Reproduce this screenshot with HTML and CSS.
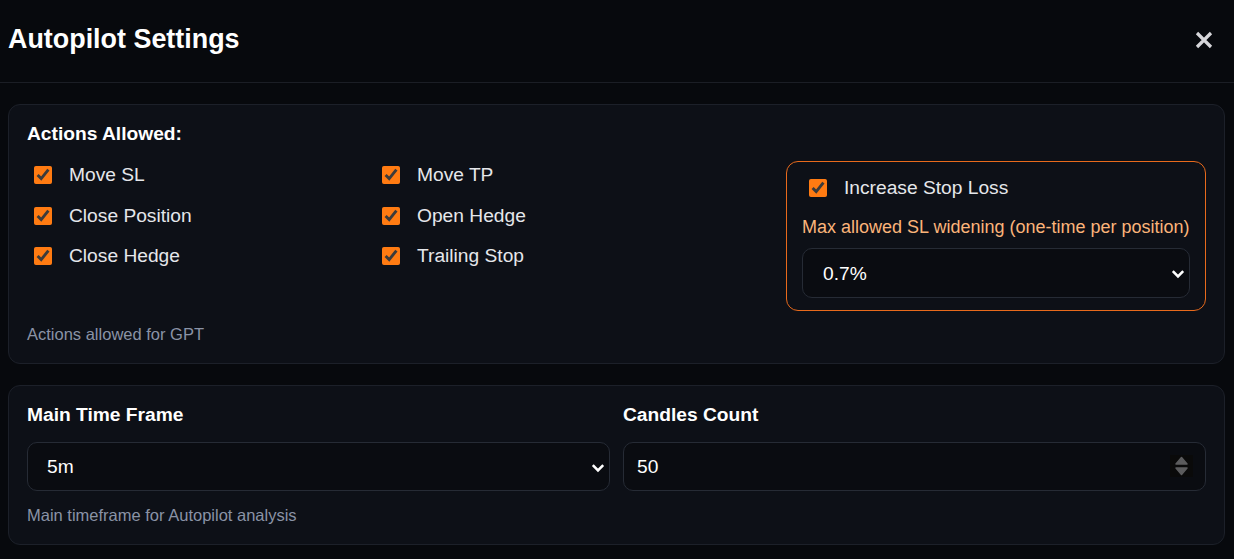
FILE: index.html
```html
<!DOCTYPE html>
<html lang="en">
  <head>
    <meta charset="UTF-8" />
    <meta name="viewport" content="width=device-width, initial-scale=1.0" />
    <title>Autopilot Settings</title>
    <link rel="stylesheet" href="styles.css">
  </head>

  <body>
    <div class="modal">
      <header class="modal-head">
        <h1>Autopilot Settings</h1>
        <button class="close" aria-label="Close">
          <svg width="18" height="18" viewBox="0 0 18 18">
            <path d="M2 2 L16 16 M16 2 L2 16" />
          </svg>
        </button>
      </header>

      <div class="modal-body">
        <section class="card">
          <h2 class="card-title">Actions Allowed:</h2>
          <div class="actions">
            <div class="actions-grid">
              <label class="check"><input type="checkbox" checked> Move SL</label>
              <label class="check"><input type="checkbox" checked> Move TP</label>
              <label class="check"><input type="checkbox" checked> Close Position</label>
              <label class="check"><input type="checkbox" checked> Open Hedge</label>
              <label class="check"><input type="checkbox" checked> Close Hedge</label>
              <label class="check"><input type="checkbox" checked> Trailing Stop</label>
            </div>
            <div class="sl-box">
              <label class="check"><input type="checkbox" checked> Increase Stop Loss</label>
              <p class="sl-note">Max allowed SL widening (one-time per position)</p>
              <div class="select-wrap tall">
                <select class="field-input">
                  <option>0.5%</option>
                  <option selected>0.7%</option>
                  <option>1%</option>
                </select>
                <svg class="chev" width="14" height="10" viewBox="0 0 14 10"><path d="M1.8 2.2 L7 7.4 L12.2 2.2" /></svg>
              </div>
            </div>
          </div>
          <p class="hint">Actions allowed for GPT</p>
        </section>

        <section class="card">
          <div class="fields">
            <div class="field">
              <label class="field-label">Main Time Frame</label>
              <div class="select-wrap">
                <select class="field-input">
                  <option>1m</option>
                  <option selected>5m</option>
                  <option>15m</option>
                  <option>1h</option>
                </select>
                <svg class="chev" width="14" height="10" viewBox="0 0 14 10"><path d="M1.8 2.2 L7 7.4 L12.2 2.2" /></svg>
              </div>
            </div>
            <div class="field">
              <label class="field-label">Candles Count</label>
              <div class="select-wrap">
                <input class="field-input num" type="number" value="50">
                <svg class="spin" width="23" height="22" viewBox="0 0 23 22">
                  <path d="M11.5 2.5 L17 9 L6 9 Z" />
                  <path d="M6 13 L17 13 L11.5 19.5 Z" />
                </svg>
              </div>
            </div>
          </div>
          <p class="hint">Main timeframe for Autopilot analysis</p>
        </section>
      </div>
    </div>
  </body>
</html>
```

FILE: styles.css
```css
* {
  margin: 0;
  padding: 0;
  box-sizing: border-box;
}

body {
  background-color: #07090d;
  color: #e5e7eb;
  font-family: "Liberation Sans", Arial, sans-serif;
  color-scheme: dark;
}

.modal-head {
  display: flex;
  align-items: center;
  justify-content: space-between;
  padding: 24px 21px 27px 8px;
  border-bottom: 1px solid #1b1e25;
}

.modal-head h1 {
  font-size: 26.9px;
  line-height: 31px;
  font-weight: 700;
  color: #ffffff;
}

.close {
  background: none;
  border: none;
  cursor: pointer;
  display: flex;
}

.close svg path {
  stroke: #d6d6da;
  stroke-width: 3.2;
  fill: none;
}

.modal-body {
  padding: 21px 9px 0 8px;
  display: flex;
  flex-direction: column;
  gap: 21px;
}

.card {
  background-color: #0d1017;
  border: 1px solid #1c2029;
  border-radius: 12px;
  padding: 18px 18px 19px;
}

.card-title {
  font-size: 19.2px;
  line-height: 22px;
  font-weight: 700;
  color: #ffffff;
  margin-bottom: 16px;
}

.actions {
  display: flex;
  align-items: flex-start;
}

.actions-grid {
  flex: 1;
  display: grid;
  grid-template-columns: 348px 1fr;
  grid-auto-rows: 28px;
  row-gap: 12.5px;
}

.check {
  display: flex;
  align-items: center;
  gap: 17px;
  padding: 0 7px;
  font-size: 19.2px;
  line-height: 22px;
  color: #e5e7eb;
  cursor: pointer;
}

.check input {
  width: 18px;
  height: 18px;
  margin: 0;
  accent-color: #ff7b12;
  flex-shrink: 0;
}

.sl-box {
  width: 420px;
  border: 1px solid #e86a1c;
  border-radius: 12px;
  padding: 15px 15px 12px 15px;
}

.sl-box .check {
  height: 22px;
}

.sl-note {
  margin-top: 18px;
  font-size: 18px;
  line-height: 20px;
  color: #fbb47a;
}

.select-wrap {
  position: relative;
}

.select-wrap.tall {
  margin-top: 11px;
}

.select-wrap.tall .field-input {
  height: 50px;
  padding-left: 20px;
}

.chev {
  position: absolute;
  right: 5px;
  top: 50%;
  margin-top: -4px;
  pointer-events: none;
}

.chev path {
  stroke: #ffffff;
  stroke-width: 2.6;
  fill: none;
}

.spin {
  position: absolute;
  right: 13px;
  top: 13px;
  background-color: #0a0a0a;
  pointer-events: none;
}

.spin path {
  fill: #5c5c5e;
  stroke: #5c5c5e;
  stroke-width: 1.5;
  stroke-linejoin: round;
}

.field-input {
  width: 100%;
  height: 49px;
  background-color: #0a0c11;
  color: #ffffff;
  border: 1px solid #262b35;
  border-radius: 10px;
  font-family: "Liberation Sans", Arial, sans-serif;
  font-size: 19.2px;
  padding: 0 24px 0 19px;
  outline: none;
  appearance: none;
}

.field-input.num {
  padding: 0 40px 0 13px;
  -moz-appearance: textfield;
}

.field-input.num::-webkit-inner-spin-button,
.field-input.num::-webkit-outer-spin-button {
  -webkit-appearance: none;
  margin: 0;
}

.hint {
  margin-top: 13px;
  font-size: 16.5px;
  line-height: 20px;
  color: #8a93a6;
}

.fields {
  display: grid;
  grid-template-columns: 1fr 1fr;
  column-gap: 13px;
}

.field {
  display: flex;
  flex-direction: column;
  gap: 16px;
}

.field-label {
  font-size: 19.2px;
  line-height: 22px;
  font-weight: 700;
  color: #ffffff;
}

.fields + .hint {
  margin-top: 14px;
}
```
